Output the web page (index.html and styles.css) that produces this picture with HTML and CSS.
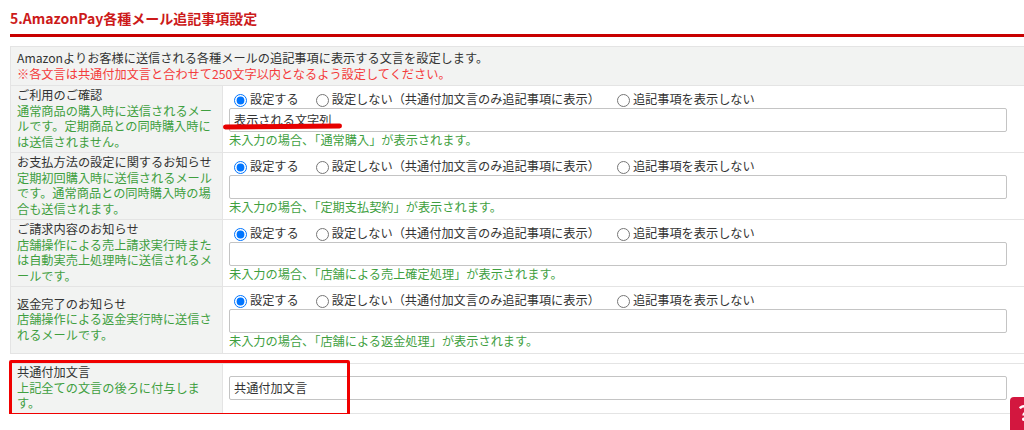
FILE: index.html
```html
<!DOCTYPE html>
<html lang="ja">
<head>
  <meta charset="UTF-8" />
  <title>AmazonPay各種メール追記事項設定</title>
  <link rel="stylesheet" href="styles.css">
</head>
<body>
  <div class="page">
    <h2 class="section-title">5.AmazonPay各種メール追記事項設定</h2>

    <table class="settings">
      <colgroup><col class="col-label"><col></colgroup>
      <tr>
        <td colspan="2" class="intro">
          Amazonよりお客様に送信される各種メールの追記事項に表示する文言を設定します。<br>
          <span class="note">※各文言は共通付加文言と合わせて250文字以内となるよう設定してください。</span>
        </td>
      </tr>
      <tr>
        <th>ご利用のご確認<span class="desc">通常商品の購入時に送信されるメールです。定期商品との同時購入時には送信されません。</span></th>
        <td>
          <div class="choices">
            <label><input type="radio" name="m1" checked>設定する</label>
            <label><input type="radio" name="m1">設定しない（共通付加文言のみ追記事項に表示）</label>
            <label><input type="radio" name="m1">追記事項を表示しない</label>
          </div>
          <div class="field">
            <input type="text" class="text" value="表示される文字列">
            <span class="mark"></span>
          </div>
          <p class="hint">未入力の場合、「通常購入」が表示されます。</p>
        </td>
      </tr>
      <tr>
        <th>お支払方法の設定に関するお知らせ<span class="desc">定期初回購入時に送信されるメールです。通常商品との同時購入時の場合も送信されます。</span></th>
        <td>
          <div class="choices">
            <label><input type="radio" name="m2" checked>設定する</label>
            <label><input type="radio" name="m2">設定しない（共通付加文言のみ追記事項に表示）</label>
            <label><input type="radio" name="m2">追記事項を表示しない</label>
          </div>
          <div class="field"><input type="text" class="text"></div>
          <p class="hint">未入力の場合、「定期支払契約」が表示されます。</p>
        </td>
      </tr>
      <tr>
        <th>ご請求内容のお知らせ<span class="desc">店舗操作による売上請求実行時または自動実売上処理時に送信されるメールです。</span></th>
        <td>
          <div class="choices">
            <label><input type="radio" name="m3" checked>設定する</label>
            <label><input type="radio" name="m3">設定しない（共通付加文言のみ追記事項に表示）</label>
            <label><input type="radio" name="m3">追記事項を表示しない</label>
          </div>
          <div class="field"><input type="text" class="text"></div>
          <p class="hint">未入力の場合、「店舗による売上確定処理」が表示されます。</p>
        </td>
      </tr>
      <tr>
        <th>返金完了のお知らせ<span class="desc">店舗操作による返金実行時に送信されるメールです。</span></th>
        <td>
          <div class="choices">
            <label><input type="radio" name="m4" checked>設定する</label>
            <label><input type="radio" name="m4">設定しない（共通付加文言のみ追記事項に表示）</label>
            <label><input type="radio" name="m4">追記事項を表示しない</label>
          </div>
          <div class="field"><input type="text" class="text"></div>
          <p class="hint">未入力の場合、「店舗による返金処理」が表示されます。</p>
        </td>
      </tr>
    </table>

    <div class="common">
      <table class="settings">
        <colgroup><col class="col-label"><col></colgroup>
        <tr>
          <th>共通付加文言<span class="desc">上記全ての文言の後ろに付与します。</span></th>
          <td><div class="field"><input type="text" class="text" value="共通付加文言"></div></td>
        </tr>
      </table>
      <div class="highlight"></div>
    </div>
  </div>

  <a class="float-tab" href="#">？</a>
</body>
</html>
```

FILE: styles.css
```css
* {
  box-sizing: border-box;
}

body {
  margin: 0;
  overflow: hidden;
  background: #fff;
  color: #333;
  font-family: "Noto Sans CJK JP", "Noto Sans", sans-serif;
  font-size: 12.2px;
  line-height: 15.5px;
}

.page {
  padding: 8px 0 0 10px;
  width: 1060px;
}

.section-title {
  margin: 0;
  padding: 0 0 6px;
  font-size: 14px;
  line-height: 20px;
  font-weight: bold;
  color: #cc1a1a;
  border-bottom: 3px solid #c80000;
}

.settings {
  margin-top: 9px;
  width: 1040px;
  table-layout: fixed;
  border-collapse: collapse;
  border: 1px solid #dedede;
}

.col-label {
  width: 212px;
}

.settings th,
.settings td {
  border: 1px solid #e4e4e4;
  vertical-align: middle;
}

.settings th {
  padding: 1px 6px;
  background: #f2f3f2;
  font-weight: normal;
  text-align: left;
}

.settings td {
  padding: 5px 6px 4px;
}

.settings .intro {
  padding: 4px 6px 3px;
  background: #f2f3f2;
}

.note {
  color: #f43b3b;
}

.desc {
  display: block;
  color: #3f9f3f;
}

.choices {
  display: flex;
  align-items: center;
  height: 17px;
}

.choices label {
  display: flex;
  align-items: center;
  margin-right: 12px;
}

.choices input {
  width: 13px;
  height: 13px;
  margin: 1px 3px 0 5px;
}

.field {
  position: relative;
}

.text {
  display: block;
  width: 778px;
  height: 24px;
  padding: 0 4px;
  border: 1px solid #c4c4c4;
  border-radius: 2px;
  font: inherit;
  color: #333;
  background: #fff;
}

.mark {
  position: absolute;
  left: -6px;
  top: 16px;
  width: 119px;
  height: 5px;
  border-radius: 3px;
  background: #e60000;
  transform: rotate(-0.6deg);
}

.hint {
  margin: 0;
  line-height: 16px;
  color: #3f9f3f;
}

.common {
  position: relative;
}

.common .settings td {
  padding: 4px 6px;
}

.highlight {
  position: absolute;
  left: -1px;
  top: -3px;
  width: 341px;
  height: 56px;
  border: 3.5px solid #f00000;
  border-radius: 2px;
}

.float-tab {
  position: fixed;
  left: 1010px;
  top: 397px;
  width: 32px;
  height: 40px;
  padding: 4px 0 0 4px;
  border-radius: 4px 0 0 0;
  background: #d3173f;
  color: #fff;
  font-size: 20px;
  font-weight: bold;
  line-height: 24px;
  text-decoration: none;
}
```
